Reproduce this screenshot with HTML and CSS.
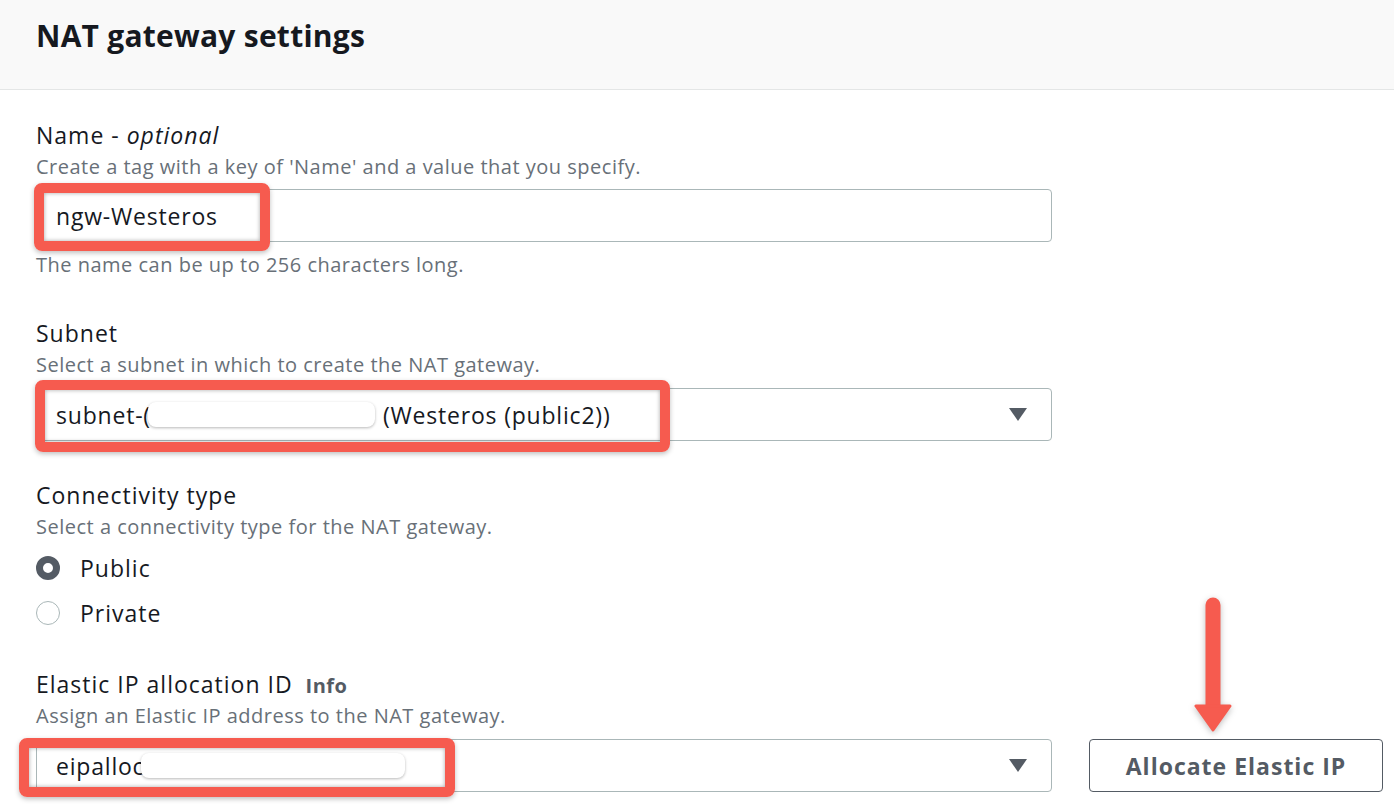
FILE: index.html
```html
<!DOCTYPE html>
<html lang="en">
<head>
<meta charset="utf-8">
<title>NAT gateway settings</title>
<link rel="stylesheet" href="styles.css">
</head>
<body>
<div class="panel">
  <header class="panel-header">
    <h2 class="panel-title">NAT gateway settings</h2>
  </header>
  <div class="panel-body">
    <div class="field field-name">
      <div class="label">Name - <i>optional</i></div>
      <div class="desc">Create a tag with a key of 'Name' and a value that you specify.</div>
      <div class="control">
        <div class="input"><span class="value">ngw-Westeros</span></div>
        <span class="hl hl-name"></span>
      </div>
      <div class="hint">The name can be up to 256 characters long.</div>
    </div>

    <div class="field field-subnet">
      <div class="label">Subnet</div>
      <div class="desc">Select a subnet in which to create the NAT gateway.</div>
      <div class="control">
        <div class="input select">
          <span class="value">subnet-(</span><span class="redact redact-subnet"></span><span class="value">(Westeros (public2))</span>
          <span class="caret"></span>
        </div>
        <span class="hl hl-subnet"></span>
      </div>
    </div>

    <div class="field field-conn">
      <div class="label">Connectivity type</div>
      <div class="desc">Select a connectivity type for the NAT gateway.</div>
      <div class="radios">
        <label class="radio"><span class="dot dot-on"></span><span>Public</span></label>
        <label class="radio"><span class="dot"></span><span>Private</span></label>
      </div>
    </div>

    <div class="field field-eip">
      <div class="label">Elastic IP allocation ID <span class="info">Info</span></div>
      <div class="desc">Assign an Elastic IP address to the NAT gateway.</div>
      <div class="eip-row">
        <div class="control">
          <div class="input select">
            <span class="value">eipalloc</span><span class="redact redact-eip"></span>
            <span class="caret"></span>
          </div>
          <span class="hl hl-eip"></span>
        </div>
        <button class="btn">Allocate Elastic IP</button>
        <svg class="arrow" width="50" height="145" viewBox="0 0 50 145" aria-hidden="true">
          <line x1="25" y1="15" x2="25" y2="118" stroke="#f65b4f" stroke-width="15" stroke-linecap="round"/>
          <polygon points="8,116 42,116 25,140" fill="#f65b4f" stroke="#f65b4f" stroke-width="3" stroke-linejoin="round"/>
        </svg>
      </div>
    </div>
  </div>
</div>
</body>
</html>
```
FILE: styles.css
```css
* { box-sizing: border-box; }
html, body {
  margin: 0;
  padding: 0;
  background: #ffffff;
  font-family: "Open Sans", "Noto Sans", Arial, sans-serif;
  color: #16191f;
}
.panel { width: 1394px; height: 808px; overflow: hidden; }
.panel-header {
  height: 90px;
  background: #f9f9f9;
  border-bottom: 1px solid #e4e6e6;
  padding-left: 36px;
  display: flex;
  align-items: center;
}
.panel-title {
  margin: 0;
  margin-top: -18px;
  font-size: 30px;
  font-weight: 700;
  letter-spacing: 0.25px;
  color: #16191f;
}
.panel-body { padding: 30px 0 0 36px; }
.field { display: flex; flex-direction: column; }
.label {
  font-size: 23px;
  line-height: 30px;
  color: #16191f;
  letter-spacing: 1px;
}
.label i { font-style: italic; }
.desc {
  font-size: 20px;
  line-height: 26px;
  margin-top: 4px;
  color: #687078;
  letter-spacing: 0.5px;
}
.hint {
  font-size: 20px;
  line-height: 26px;
  color: #687078;
  margin-top: 10px;
  letter-spacing: 0.5px;
}
.control { position: relative; width: 1016px; margin-top: 9px; }
.input {
  height: 53px;
  border: 1px solid #aab7b8;
  border-radius: 4px;
  display: flex;
  align-items: center;
  padding-left: 19px;
  font-size: 23px;
  color: #16191f;
  background: #fff;
  position: relative;
}
.value { white-space: pre; letter-spacing: 0.8px; }
.select { padding-right: 50px; }
.caret {
  position: absolute;
  right: 24px;
  top: 19px;
  width: 0;
  height: 0;
  border-left: 9px solid transparent;
  border-right: 9px solid transparent;
  border-top: 13px solid #545b64;
}
.redact {
  display: inline-block;
  height: 25px;
  background: #ffffff;
  border-radius: 8px;
  box-shadow: 0 1px 3px rgba(0,0,0,0.28);
}
.redact-subnet { width: 227px; margin: 0 8px 0 -3px; }
.redact-eip { width: 264px; margin-left: -3px; }

.hl {
  position: absolute;
  border: 10px solid #f65b4f;
  border-radius: 8px;
  box-shadow: 0 2px 5px rgba(0,0,0,0.25), inset 0 0 4px rgba(0,0,0,0.35);
  pointer-events: none;
}
.hl-name { left: -2px; top: -6px; width: 236px; height: 68px; }
.hl-subnet { left: -1px; top: -8px; width: 635px; height: 72px; }
.hl-eip { left: -17px; top: -1px; width: 436px; height: 59px; }

.field-subnet { margin-top: 40px; }
.field-subnet .control { margin-top: 10px; }
.field-conn { margin-top: 39px; }
.radios { display: flex; flex-direction: column; margin-top: 5px; }
.radio {
  display: flex;
  align-items: center;
  height: 45px;
  font-size: 23px;
  color: #16191f;
  letter-spacing: 1px;
}
.dot {
  width: 24px;
  height: 24px;
  border-radius: 50%;
  border: 1.5px solid #aab7b8;
  margin-right: 20px;
  background: #fff;
}
.dot-on { border: 7px solid #545b64; }
.field-eip { margin-top: 34px; }
.field-eip .control { margin-top: 0; }
.field-eip .desc { margin-top: 2px; }
.info {
  font-size: 20px;
  font-weight: 700;
  color: #545b64;
  margin-left: 6px;
  letter-spacing: 0.5px;
}
.eip-row { display: flex; align-items: flex-end; gap: 37px; position: relative; margin-top: 10px; }
.btn {
  width: 294px;
  height: 53px;
  border: 1px solid #545b64;
  border-radius: 4px;
  background: #fff;
  font-family: inherit;
  font-size: 23px;
  font-weight: 700;
  color: #545b64;
  letter-spacing: 1px;
}
.arrow {
  position: absolute;
  left: 1152px;
  top: -149px;
  filter: drop-shadow(0 2px 3px rgba(0,0,0,0.25));
}
```
